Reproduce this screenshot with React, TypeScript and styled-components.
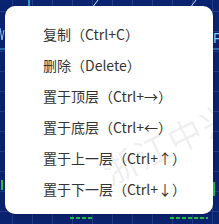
import styled, { createGlobalStyle } from "styled-components";

const GlobalStyle = createGlobalStyle`
  html, body {
    margin: 0;
    padding: 0;
    background: #0b2472;
  }
  * {
    box-sizing: border-box;
  }
`;

const Stage = styled.div`
  position: relative;
  width: 219px;
  height: 224px;
  overflow: hidden;
  background-color: #0b2472;
  background-image:
    repeating-linear-gradient(
      to right,
      transparent 0,
      transparent 12px,
      rgba(90, 120, 200, 0.3) 12px,
      rgba(90, 120, 200, 0.3) 13px,
      transparent 13px,
      transparent 20px
    ),
    repeating-linear-gradient(
      to bottom,
      transparent 0,
      transparent 11px,
      rgba(90, 120, 200, 0.3) 11px,
      rgba(90, 120, 200, 0.3) 12px,
      transparent 12px,
      transparent 20px
    );
`;

const ChartLines = styled.svg`
  position: absolute;
  inset: 0;
  width: 219px;
  height: 224px;
`;

const Menu = styled.ul`
  position: absolute;
  left: 5px;
  top: 6px;
  width: 208px;
  height: 208px;
  margin: 0;
  padding: 12px 0 0 38px;
  list-style: none;
  background: #ffffff;
  border-radius: 10px;
  overflow: hidden;
  box-shadow: 0 2px 8px rgba(0, 0, 0, 0.2);
`;

const MenuItem = styled.li`
  position: relative;
  z-index: 1;
  height: 31px;
  display: flex;
  align-items: center;
  font-family: "Noto Sans CJK SC", "Noto Sans", sans-serif;
  font-size: 14px;
  color: #333333;
  white-space: nowrap;
  cursor: pointer;
`;

const Watermark = styled.div`
  position: absolute;
  left: 110px;
  top: 140px;
  font-family: "Noto Sans CJK SC", sans-serif;
  font-size: 34px;
  letter-spacing: 2px;
  color: rgba(0, 0, 0, 0.08);
  transform: rotate(-26deg);
  transform-origin: left bottom;
  white-space: nowrap;
  pointer-events: none;
`;

const items = [
  "复制（Ctrl+C）",
  "删除（Delete）",
  "置于顶层（Ctrl+→）",
  "置于底层（Ctrl+←）",
  "置于上一层（Ctrl+↑）",
  "置于下一层（Ctrl+↓）",
];

export default function App() {
  return (
    <>
      <GlobalStyle />
      <Stage>
        <ChartLines viewBox="0 0 219 224">
          <line x1="29" y1="0" x2="29" y2="8" stroke="#35c6f0" strokeWidth="1.5" />
          <line x1="98" y1="0" x2="92" y2="8" stroke="#d0e4ff" strokeWidth="1" />
          <line x1="196" y1="0" x2="190" y2="8" stroke="#d0e4ff" strokeWidth="1" />
          <line x1="0" y1="49" x2="219" y2="49" stroke="#4ab7e8" strokeWidth="1" />
          <path d="M0 28 L2 40 L4 30" fill="none" stroke="#8fd0ff" strokeWidth="1" />
          <text x="213" y="43" fill="#8fd0ff" fontSize="14" fontFamily="Liberation Sans, sans-serif">F</text>
          <line x1="2" y1="180" x2="2" y2="190" stroke="#2cff3a" strokeWidth="1.5" />
          <line x1="214" y1="182" x2="214" y2="196" stroke="#2cff3a" strokeWidth="1.5" />
          <line x1="70" y1="218" x2="92" y2="218" stroke="#2cff3a" strokeWidth="1.5" strokeDasharray="4 2" />
          <line x1="170" y1="218" x2="208" y2="218" stroke="#2cff3a" strokeWidth="1.5" strokeDasharray="4 2" />
        </ChartLines>
        <Menu>
          <Watermark>浙江中兴</Watermark>
          {items.map((label) => (
            <MenuItem key={label}>{label}</MenuItem>
          ))}
        </Menu>
      </Stage>
    </>
  );
}
